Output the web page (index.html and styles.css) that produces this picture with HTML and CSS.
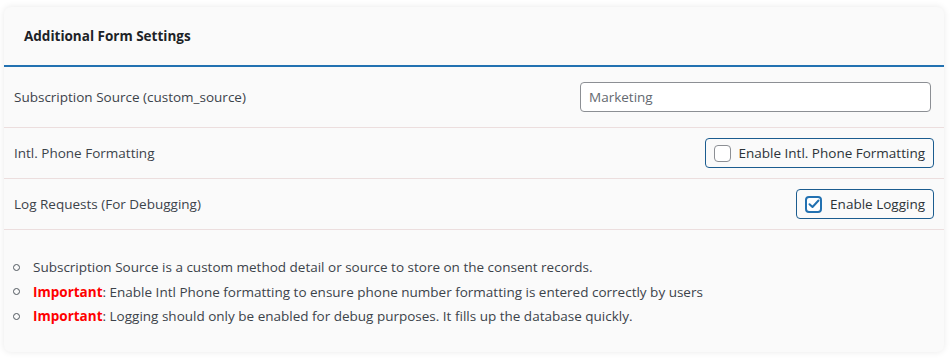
FILE: index.html
```html
<!DOCTYPE html>
<html lang="en">
<head>
  <meta charset="UTF-8" />
  <title>Additional Form Settings</title>
  <link rel="stylesheet" href="styles.css">
</head>
<body>
  <div class="card">
    <div class="card-head">
      <h3>Additional Form Settings</h3>
    </div>

    <div class="row row-first">
      <label for="source">Subscription Source (custom_source)</label>
      <input type="text" id="source" placeholder="Marketing" />
    </div>

    <div class="row">
      <span class="row-label">Intl. Phone Formatting</span>
      <label class="check-btn">
        <span class="box"></span>
        Enable Intl. Phone Formatting
      </label>
    </div>

    <div class="row">
      <span class="row-label">Log Requests (For Debugging)</span>
      <label class="check-btn">
        <span class="box checked">
          <svg width="12" height="10" viewBox="0 0 12 10"><path d="M1.5 5.2 L4.5 8 L10.5 1.5" fill="none" stroke="#2271b1" stroke-width="2" stroke-linecap="round" stroke-linejoin="round"/></svg>
        </span>
        Enable Logging
      </label>
    </div>

    <ul class="notes">
      <li>Subscription Source is a custom method detail or source to store on the consent records.</li>
      <li><b class="imp">Important</b>: Enable Intl Phone formatting to ensure phone number formatting is entered correctly by users</li>
      <li><b class="imp">Important</b>: Logging should only be enabled for debug purposes. It fills up the database quickly.</li>
    </ul>
  </div>
</body>
</html>
```

FILE: styles.css
```css
* {
  box-sizing: border-box;
}

html, body {
  margin: 0;
  padding: 0;
  background: #ffffff;
  font-family: "Open Sans", "Noto Sans", sans-serif;
  font-size: 13.5px;
  color: #3c434a;
}

body {
  padding: 7px 8px 8px 4px;
}

.card {
  background: #fafafa;
  border-radius: 7px;
  box-shadow: 0 0 7px rgba(0, 0, 0, 0.09);
  overflow: hidden;
}

.card-head {
  height: 60px;
  display: flex;
  align-items: center;
  padding: 0 20px;
  border-bottom: 2px solid #2271b1;
}

.card-head h3 {
  margin: 0;
  font-size: 13.5px;
  font-weight: 700;
  color: #1d2327;
}

.row {
  display: flex;
  align-items: center;
  justify-content: space-between;
  padding: 10px;
  border-bottom: 1px solid #ecdede;
}

.row-first {
  padding: 15px 13px 15px 10px;
}

.row input {
  width: 351px;
  height: 30px;
  border: 1px solid #8c8f94;
  border-radius: 4px;
  padding: 0 8px;
  font-family: inherit;
  font-size: 13.5px;
  background: #fff;
}

.row input::placeholder {
  color: #646970;
}

.check-btn {
  display: flex;
  align-items: center;
  gap: 8px;
  height: 30px;
  padding: 0 8px;
  border: 1px solid #1b5c8f;
  border-radius: 4px;
  color: #2c3338;
}

.box {
  width: 17px;
  height: 17px;
  border: 1px solid #8c8f94;
  border-radius: 4px;
  background: #fff;
  display: flex;
  align-items: center;
  justify-content: center;
}

.box.checked {
  border: 2px solid #2271b1;
}

.notes {
  margin: 0;
  padding: 25px 10px 23px 29px;
  list-style: none;
}

.notes li {
  line-height: 24.5px;
}

.notes li::before {
  content: "";
  display: inline-block;
  width: 5px;
  height: 5px;
  border: 1px solid #50575e;
  border-radius: 50%;
  margin: 0 13px 2px -20px;
  vertical-align: middle;
}

.imp {
  color: #ff0000;
}
```
